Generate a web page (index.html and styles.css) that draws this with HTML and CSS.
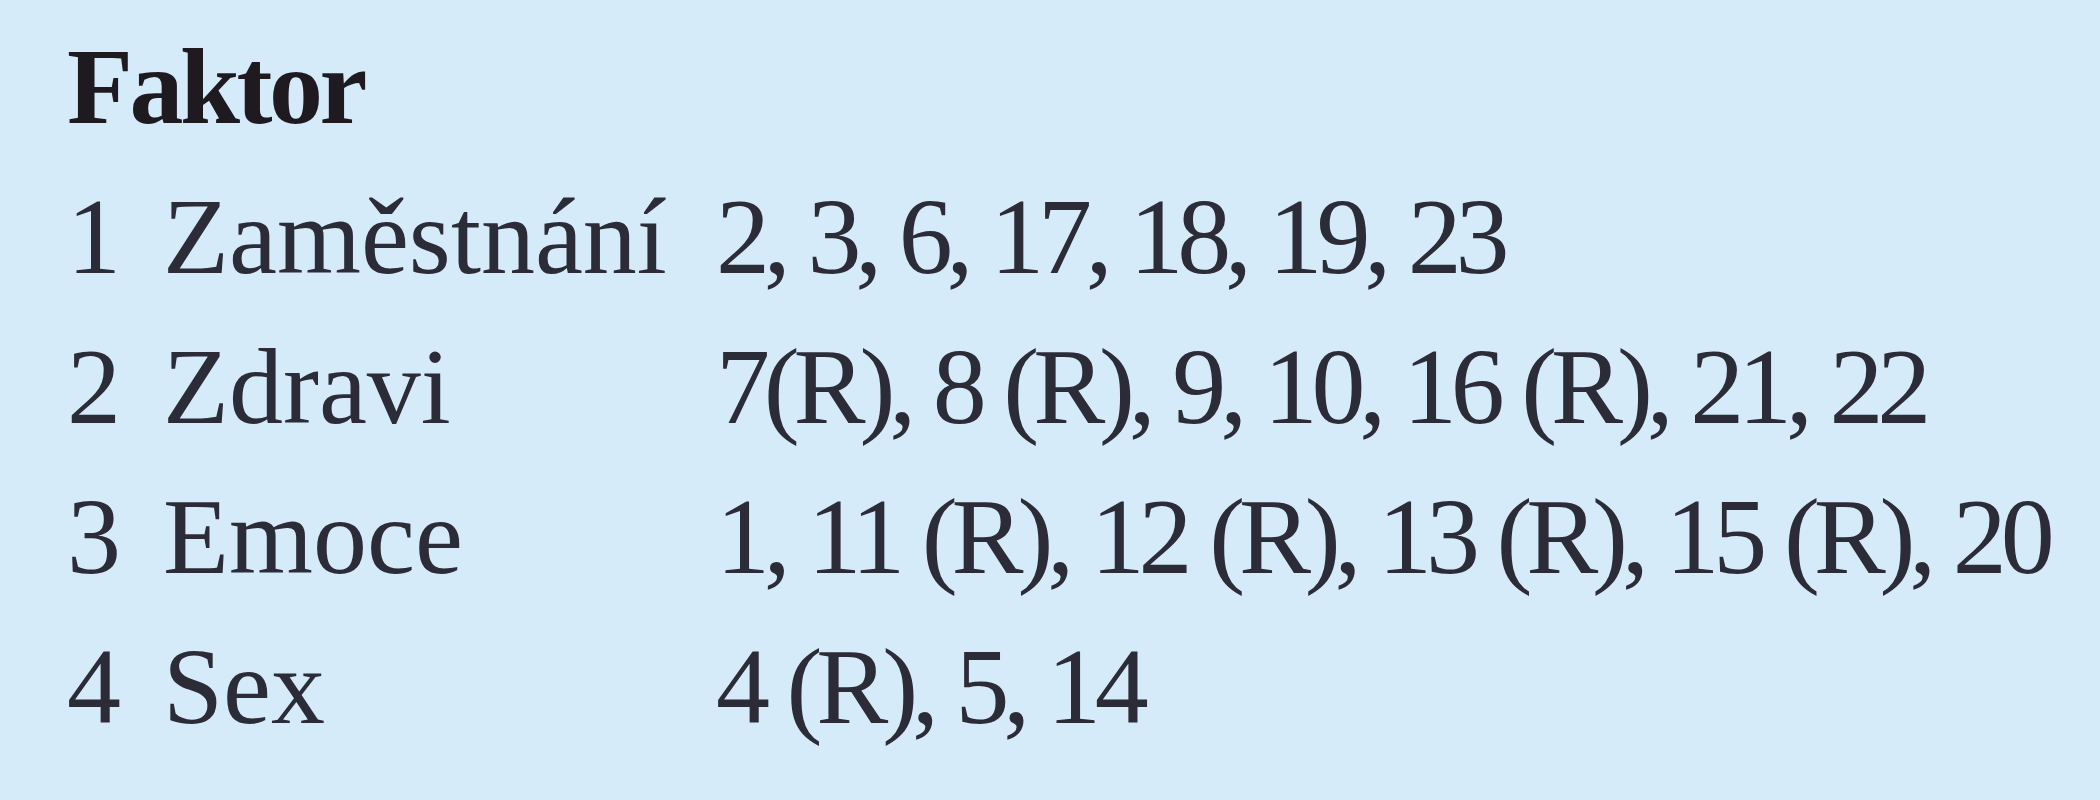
FILE: index.html
```html
<!DOCTYPE html>
<html lang="cs">
<head>
<meta charset="utf-8">
<title>Faktor</title>
<link rel="stylesheet" href="styles.css">
</head>
<body>
<div class="panel">
  <div class="title">Faktor</div>
  <div class="table">
    <div class="num">1</div><div class="label">Zaměstnání</div><div class="items">2, 3, 6, 17, 18, 19, 23</div>
    <div class="num">2</div><div class="label">Zdravi</div><div class="items">7(R), 8 (R), 9, 10, 16 (R), 21, 22</div>
    <div class="num">3</div><div class="label">Emoce</div><div class="items">1, 11 (R), 12 (R), 13 (R), 15 (R), 20</div>
    <div class="num">4</div><div class="label">Sex</div><div class="items">4 (R), 5, 14</div>
  </div>
</div>
</body>
</html>
```
FILE: styles.css
```css
html, body {
  margin: 0;
  padding: 0;
  background: #d5ebf9;
}
body {
  width: 2100px;
  height: 800px;
  overflow: hidden;
  font-family: "Liberation Serif", "Times New Roman", serif;
  color: #2c2b38;
}
.panel {
  padding: 12px 0 0 67px;
  font-size: 108px;
  line-height: 150px;
}
.title {
  font-weight: bold;
  color: #1e1a1f;
  letter-spacing: -3.5px;
}
.table {
  display: grid;
  grid-template-columns: 54px 553px 1fr;
  column-gap: 0;
}
.num {
  white-space: nowrap;
}
.label {
  padding-left: 42px;
  white-space: nowrap;
}
.items {
  padding-left: 42px;
  white-space: nowrap;
  letter-spacing: -6.2px;
  word-spacing: 2px;
}
```
